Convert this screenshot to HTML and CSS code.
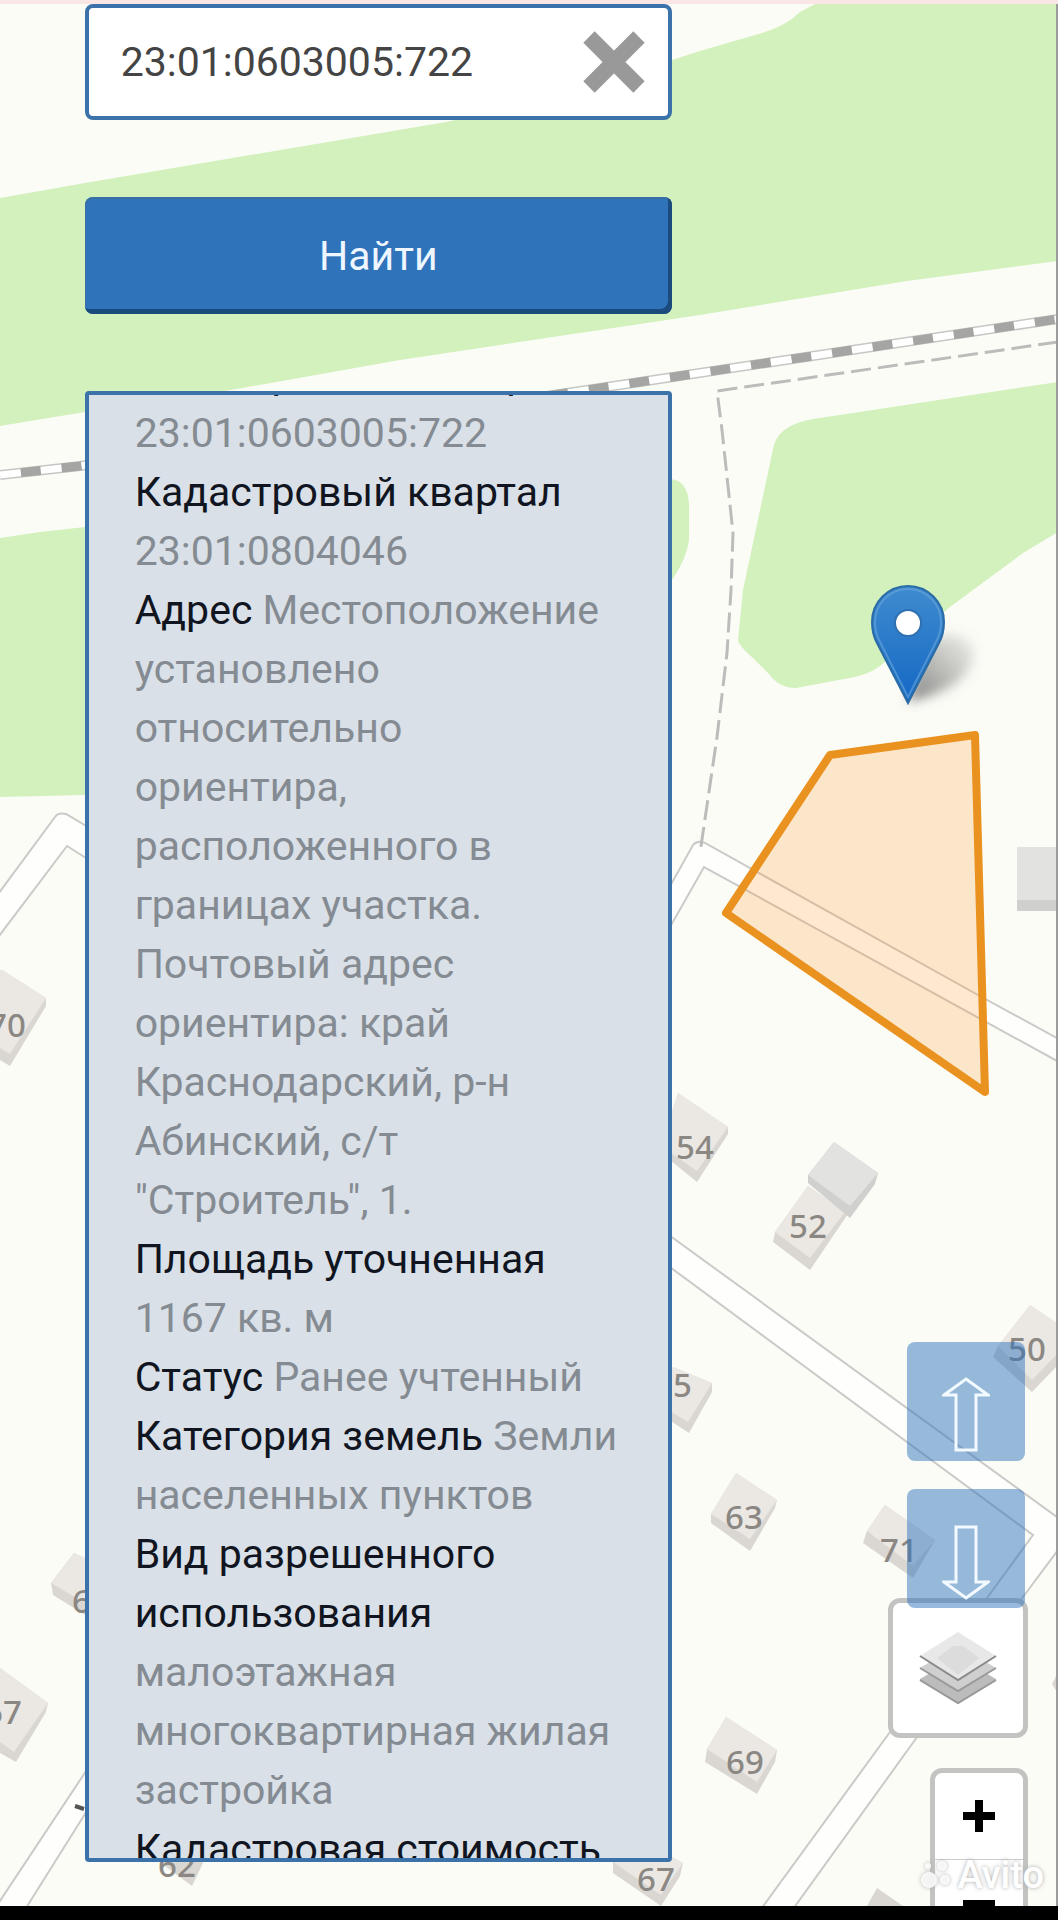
FILE: index.html
```html
<!DOCTYPE html>
<html lang="ru">
<head>
    <meta charset="UTF-8">
    <meta name="viewport" content="width=device-width, initial-scale=1">
    <title>Кадастровая карта</title>
    <link rel="stylesheet" href="styles.css">
</head>
<body>
    <main class="screen">
        <!-- карта -->
        <svg class="map" viewBox="0 0 1058 1906" preserveAspectRatio="xMidYMin slice" aria-hidden="true">
            <defs>
                <linearGradient id="pin" x1="0" y1="0" x2="0" y2="1">
                    <stop offset="0" stop-color="#3f8bcf"/>
                    <stop offset="1" stop-color="#1468c4"/>
                </linearGradient>
                <linearGradient id="shade" x1="0" y1="1" x2="1" y2="0">
                    <stop offset="0" stop-color="#555" stop-opacity=".75"/>
                    <stop offset="1" stop-color="#777" stop-opacity=".1"/>
                </linearGradient>
                <filter id="soft" x="-30%" y="-30%" width="160%" height="160%">
                    <feGaussianBlur stdDeviation="6"/>
                </filter>
            </defs>

            <!-- зелёные зоны -->
            <g class="green">
                <path d="M0 198L85 183L446 122L560 98L672 60L700 51L762 33Q786 26 800 12L815 4H1058V261L907 281L700 315L400 360L237 389L85 412L0 426Z"/>
                <path d="M0 538L40 532L85 527L400 480H660Q688 474 689 505V540Q687 558 672 580L600 795H85L0 797Z"/>
                <path d="M1058 382L813 419Q777 425 773 449L743 590L738 640Q739 646 753 658L769 674Q779 688 796 688L855 677Q874 673 887 660L950 607L1023 553L1058 532Z"/>
            </g>
            <rect class="top-line" width="1058" height="4"/>

            <!-- дороги -->
            <g class="road">
                <path d="M-10 905L55 817Q58 812 66 814L140 858L140 892L67 846L-10 948Z"/>
                <path d="M640 940L693 845Q697 840 705 843L978 995L1068 1044V1067L704 867L640 980Z"/>
                <path d="M640 1214L1068 1525V1542L1058 1550L1023 1597L920 1733L788 1916H756L890 1732L987 1598L1033 1535L640 1245Z"/>
                <path d="M100 1750L-10 1916H21L100 1790Z"/>
            </g>

            <!-- железная дорога -->
            <path class="rail-edge" d="M0 475L80 466L640 382L1058 319"/>
            <path class="rail-bed" d="M0 475L80 466L640 382L1058 319"/>
            <path class="rail-dash" d="M0 475L80 466L640 382L1058 319"/>

            <path class="footpath" d="M1058 342L717 391L722 430L733 533L731 590L727 653L717 737L700 853"/>

            <!-- дома -->
            <g class="house-side">
                <path d="M678 1093L728 1127V1134L697 1182L660 1152Z"/>
                <path d="M808 1186L848 1214L810 1270L773 1242L775 1232Z"/>
                <path d="M673 1367L712 1383V1392L689 1433L660 1414Z"/>
                <path d="M736 1473L777 1500L775 1508L750 1551L711 1523V1514Z"/>
                <path d="M885 1505L935 1540L913 1578L863 1543L867 1531Z"/>
                <path d="M1030 1305L1058 1324V1365L1032 1392L993 1357L998 1346Z"/>
                <path d="M726 1717L777 1750L775 1762L757 1794L705 1762L707 1749Z"/>
                <path d="M650 1845L683 1863L680 1876L661 1906L613 1873V1862Z"/>
                <path d="M203 1863L192 1886L150 1855L170 1840Z"/>
                <path d="M2 970L46 998V1006L10 1066L0 1060V970Z"/>
                <path d="M0 1668L48 1703L46 1712L16 1762L0 1753Z"/>
                <path d="M74 1553L51 1583L53 1595L90 1618V1560Z"/>
                <path d="M877 1888L903 1906H867Z"/>
                <path d="M1058 1672L1052 1684L1058 1694Z"/>
            </g>
            <g class="house">
                <path d="M678 1093L728 1127L697 1171L660 1145Z"/>
                <path d="M808 1186L845 1212L810 1258L775 1232Z"/>
                <path d="M673 1367L712 1383L688 1422L660 1405Z"/>
                <path d="M736 1473L777 1500L750 1539L711 1514Z"/>
                <path d="M885 1505L935 1540L913 1566L867 1531Z"/>
                <path d="M1030 1305L1058 1324V1353L1032 1380L998 1346Z"/>
                <path d="M726 1717L777 1750L757 1782L707 1749Z"/>
                <path d="M650 1845L683 1863L661 1895L613 1862Z"/>
                <path d="M2 970L46 998L10 1054L0 1048V970Z"/>
                <path d="M0 1668L48 1703L14 1752L0 1742Z"/>
                <path d="M74 1553L51 1583L90 1606V1560Z"/>
            </g>
            <path class="shed-side" d="M834 1142L878 1173L875 1184L850 1218L808 1183V1175Z"/>
            <path class="shed" d="M834 1142L878 1173L850 1206L808 1175Z"/>
            <path class="shed-side" d="M1017 847H1058V911H1017Z"/>
            <path class="shed" d="M1017 847H1058V900H1017Z"/>
            <path d="M75 1806L84 1809" stroke="#555" stroke-width="4"/>

            <g class="number">
                <text x="-12" y="1037">70</text>
                <text x="676" y="1159">54</text>
                <text x="789" y="1238">52</text>
                <text x="1008" y="1361">50</text>
                <text x="673" y="1397">5</text>
                <text x="725" y="1529">63</text>
                <text x="880" y="1562">71</text>
                <text x="72" y="1613">6</text>
                <text x="-16" y="1724">67</text>
                <text x="726" y="1774">69</text>
                <text x="158" y="1877">62</text>
                <text x="637" y="1891">67</text>
            </g>

            <!-- участок -->
            <path class="parcel" d="M830 755L975 735L985 1092L726 913Z"/>

            <!-- маркер -->
            <path d="M908 702L922 650Q945 625 968 640Q982 656 962 678Q945 694 908 702Z" fill="url(#shade)" filter="url(#soft)"/>
            <path d="M908 703L877 643Q872 634 872 622A36 36 0 0 1 944 622Q944 634 939 643Z" fill="url(#pin)" stroke="#2b6ca6" stroke-width="2"/>
            <path d="M908 697L880 642Q875 633 875 622A33 33 0 0 1 941 622Q941 633 936 642Z" fill="none" stroke="#6aa6dc" stroke-opacity=".6" stroke-width="2"/>
            <circle cx="908" cy="623" r="13" fill="#fff" stroke="#2f70b0" stroke-width="2"/>
            <path d="M1057 4V1906" stroke="#9c9c9c" stroke-width="2"/>
        </svg>

        <section class="search">
            <form class="search-form" onsubmit="return false">
                <div class="field">
                    <input type="text" id="number" aria-label="Кадастровый номер" value="23:01:0603005:722">
                    <button type="button" class="clear" aria-label="Очистить" onclick="clearNumber()">
                        <svg viewBox="0 0 64 64"><path d="M7 7L57 57M57 7L7 57" stroke="#999" stroke-width="16"/></svg>
                    </button>
                </div>
                <button type="submit" class="find">Найти</button>
            </form>
            <div class="result" id="result" tabindex="0">
                <p><b>Кадастровый номер</b> 23:01:0603005:722</p>
                <p><b>Кадастровый квартал</b> 23:01:0804046</p>
                <p><b>Адрес</b> Местоположение установлено относительно ориентира, расположенного в границах участка. Почтовый адрес ориентира: край Краснодарский, р-н Абинский, с/т "Строитель", 1.</p>
                <p><b>Площадь уточненная</b> 1167 кв. м</p>
                <p><b>Статус</b> Ранее учтенный</p>
                <p><b>Категория земель</b> Земли населенных пунктов</p>
                <p><b>Вид разрешенного использования</b> малоэтажная многоквартирная жилая застройка</p>
                <p><b>Кадастровая стоимость</b></p>
            </div>
        </section>

        <nav class="controls">
            <button class="scroll-btn" aria-label="Вверх" onclick="scrollResult(-59)">
                <svg viewBox="0 0 48 76"><path d="M24 2L46 18H34V73H14V18H2Z"/></svg>
            </button>
            <button class="scroll-btn" aria-label="Вниз" onclick="scrollResult(59)">
                <svg viewBox="0 0 48 76"><path d="M24 74L46 58H34V3H14V58H2Z"/></svg>
            </button>
            <button class="layers" aria-label="Слои">
                <svg viewBox="0 0 78 76">
                    <path d="M1 49L39 27L77 49V51L39 74L1 51Z" fill="#bcbcbc"/>
                    <path d="M1 50L39 73L77 50" fill="none" stroke="#999" stroke-width="2"/>
                    <path d="M1 38L39 15L77 38L39 61Z" fill="#cfcfcf"/>
                    <path d="M1 38L39 61L77 38" fill="none" stroke="#999" stroke-width="2"/>
                    <path d="M1 26L39 2L77 26L39 50Z" fill="#e8e8e8"/>
                    <path d="M18 28L34 16H44L60 28L39 45Z" fill="#dcdcdc"/>
                    <path d="M1 26L39 50L77 26" fill="none" stroke="#8a8a8a" stroke-width="2"/>
                </svg>
            </button>
            <div class="zoom">
                <button aria-label="Приблизить"><svg viewBox="0 0 32 32"><path d="M16 0V32M0 16H32"/></svg></button>
                <button aria-label="Отдалить"><svg viewBox="0 0 32 32"><path d="M0 16H32"/></svg></button>
            </div>
        </nav>

        <div class="watermark">
            <svg viewBox="0 0 36 32">
                <circle cx="10" cy="21" r="8"/><circle cx="9" cy="7" r="3"/><circle cx="23" cy="7" r="5"/><circle cx="26" cy="21" r="5"/>
            </svg>
            <span>Avito</span>
        </div>
    </main>
    <div class="bottom-bar"></div>

    <script>
        const result = document.getElementById('result');
        result.scrollTop = 96;

        function scrollResult(step) {
            result.scrollTop += step;
        }

        function clearNumber() {
            document.getElementById('number').value = '';
        }
    </script>
</body>
</html>
```
FILE: styles.css
```css
* {
    box-sizing: border-box;
}
body {
    margin: 0;
    height: 100vh;
    display: flex;
    flex-direction: column;
    background-color: #000;
    font-family: Roboto, "Noto Sans", sans-serif;
    font-size: 41px;
}
.screen {
    position: relative;
    flex: 1;
    min-height: 0;
    display: flex;
    justify-content: space-between;
    overflow: hidden;
    background-color: #fcfcf7;
}
.bottom-bar {
    height: 14px;
    flex: none;
}
button {
    padding: 0;
    border: none;
    font: inherit;
    cursor: pointer;
}

/* карта */
.map {
    position: absolute;
    top: 0;
    left: 0;
    width: 100%;
    height: 100%;
}
.green {
    fill: #d2f1bd;
}
.top-line {
    fill: #fae6e5;
}
.road {
    fill: #fefefd;
    stroke: #cbcac8;
    stroke-width: 2;
}
.rail-edge, .rail-bed, .rail-dash {
    fill: none;
}
.rail-edge {
    stroke: #c6c6c4;
    stroke-width: 10;
}
.rail-bed {
    stroke: #fff;
    stroke-width: 7;
}
.rail-dash {
    stroke: #a5a5a3;
    stroke-width: 9;
    stroke-dasharray: 20 21;
    stroke-dashoffset: 20;
}
.footpath {
    fill: none;
    stroke: #bdbcba;
    stroke-width: 3;
    stroke-dasharray: 20 7;
}
.house {
    fill: #ebe8e4;
}
.house-side {
    fill: #dad7d3;
}
.shed {
    fill: #e2e2e1;
}
.shed-side {
    fill: #d0d0ce;
}
.number {
    font-family: "Noto Sans", sans-serif;
    font-size: 33px;
    font-weight: 500;
    fill: #8b8884;
}
.parcel {
    fill: #ff9318;
    fill-opacity: .2;
    stroke: #ea921f;
    stroke-width: 8;
    stroke-linejoin: round;
}

/* поиск */
.search {
    position: relative;
    width: 56%;
    padding: 4px 5px 44px 0;
    margin-left: 8%;
    display: flex;
    flex-direction: column;
    gap: 77px;
}
.search-form {
    display: flex;
    flex-direction: column;
    gap: 77px;
}
.field {
    height: 116px;
    display: flex;
    align-items: center;
    padding: 0 22px 0 32px;
    background-color: #fff;
    border: 4px solid #3a72a9;
    border-radius: 8px;
}
.field input {
    flex: 1;
    min-width: 0;
    padding: 0;
    border: none;
    outline: none;
    background: none;
    font: inherit;
    color: #444;
}
.clear {
    width: 64px;
    height: 64px;
    background: none;
}
.clear svg {
    display: block;
}
.find {
    height: 117px;
    color: #eef6ff;
    background-color: #2f73ba;
    border-radius: 8px;
    box-shadow: inset -4px -5px 0 #1b4a7c, inset 1px 2px 0 #3a6fa3;
}
.result {
    flex: 1;
    min-height: 0;
    padding: 46px;
    overflow-y: auto;
    scrollbar-width: none;
    background-color: #dae0e7;
    border: 4px solid #3a72a9;
    border-radius: 4px;
    line-height: 59px;
    color: #858b92;
    outline: none;
}
.result p {
    margin: 0;
}
.result b {
    font-weight: 400;
    color: #10151f;
}

/* кнопки карты */
.controls {
    position: relative;
    display: flex;
    flex-direction: column;
    justify-content: flex-end;
    align-items: flex-end;
    margin: 0 30px -46px 0;
}
.scroll-btn {
    position: relative;
    z-index: 1;
    width: 118px;
    height: 119px;
    flex: none;
    display: flex;
    align-items: center;
    justify-content: center;
    margin: 0 3px 28px 0;
    padding-top: 26px;
    background-color: rgba(47, 115, 187, .5);
    border-radius: 8px;
}
.scroll-btn svg {
    width: 48px;
    height: 76px;
    fill: none;
    stroke: #f2faff;
    stroke-width: 3;
}
.scroll-btn + .scroll-btn {
    margin-bottom: -10px;
}
.layers {
    width: 140px;
    height: 140px;
    flex: none;
    display: flex;
    align-items: center;
    justify-content: center;
    margin-bottom: 30px;
    background-color: #fff;
    border: 5px solid #c3c3c1;
    border-radius: 12px;
}
.layers svg {
    width: 78px;
    height: 76px;
}
.zoom {
    width: 98px;
    flex: none;
    background-color: #fff;
    border: 5px solid #c3c3c1;
    border-radius: 12px;
}
.zoom button {
    width: 100%;
    height: 87px;
    display: flex;
    align-items: center;
    justify-content: center;
    background: none;
}
.zoom button:first-child {
    border-bottom: 1px solid #ccc;
}
.zoom svg {
    width: 32px;
    height: 32px;
    stroke: #000;
    stroke-width: 8;
}
.watermark {
    position: absolute;
    right: 14px;
    bottom: 12px;
    display: flex;
    align-items: center;
    gap: 2px;
    font-size: 38px;
    font-weight: 500;
    line-height: 38px;
    color: #fff;
    text-shadow: 0 0 4px #aaa;
    pointer-events: none;
}
.watermark svg {
    width: 36px;
    height: 32px;
    fill: #fff;
    fill-opacity: .85;
    filter: drop-shadow(0 0 2px #aaa);
}
```
